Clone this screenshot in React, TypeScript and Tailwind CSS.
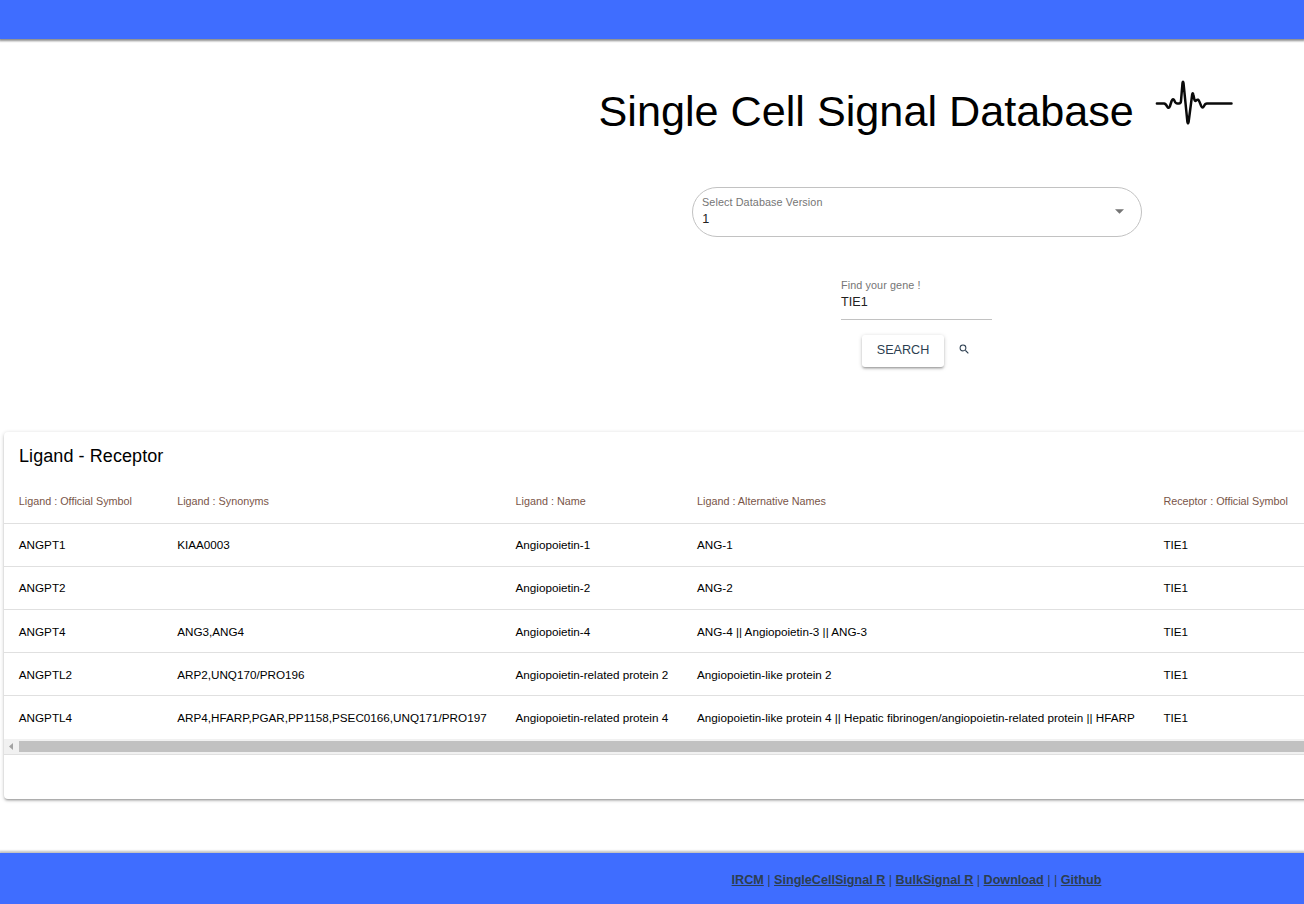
import React from 'react';

const columns = [
  { label: 'Ligand : Official Symbol', width: 'w-[158.4px]' },
  { label: 'Ligand : Synonyms', width: 'w-[338.3px]' },
  { label: 'Ligand : Name', width: 'w-[181.5px]' },
  { label: 'Ligand : Alternative Names', width: 'w-[466.4px]' },
  { label: 'Receptor : Official Symbol', width: 'w-[153.6px]' },
];

const rows = [
  ['ANGPT1', 'KIAA0003', 'Angiopoietin-1', 'ANG-1', 'TIE1'],
  ['ANGPT2', '', 'Angiopoietin-2', 'ANG-2', 'TIE1'],
  ['ANGPT4', 'ANG3,ANG4', 'Angiopoietin-4', 'ANG-4 || Angiopoietin-3 || ANG-3', 'TIE1'],
  ['ANGPTL2', 'ARP2,UNQ170/PRO196', 'Angiopoietin-related protein 2', 'Angiopoietin-like protein 2', 'TIE1'],
  [
    'ANGPTL4',
    'ARP4,HFARP,PGAR,PP1158,PSEC0166,UNQ171/PRO197',
    'Angiopoietin-related protein 4',
    'Angiopoietin-like protein 4 || Hepatic fibrinogen/angiopoietin-related protein || HFARP',
    'TIE1',
  ],
];

const rowPadding = ['pb-[1px]', 'pb-[1px]', 'pt-[2px]', 'pt-[2px]', 'pt-0'];

const links = ['IRCM', 'SingleCellSignal R', 'BulkSignal R', 'Download', '', 'Github'];

function Pulse() {
  return (
    <svg className="mt-[40px] ml-[20px] h-[50px] w-[80px] shrink-0" viewBox="0 0 80 50" fill="none">
      <path
        d="M2.9 24.4H10Q11.8 24.6 13.2 27.6Q14.8 30.4 16 27L17.6 22Q19 18.6 20.4 21.6Q21.6 24.6 23.4 24.6H25Q26.8 24.6 27 22L28.5 4Q29 1.6 29.5 4L33.4 43Q34 45.8 34.6 43L38.2 15.4Q38.8 13 39.3 15.6L40.5 21Q41 22.8 42.4 21.2Q44.2 19.6 45.4 22.6L47.2 27Q48.6 30 50 27Q51 24.4 53 24.4H77.5"
        stroke="#0a0a0a"
        strokeWidth="2.5"
        strokeLinecap="round"
        strokeLinejoin="round"
      />
    </svg>
  );
}

export default function App() {
  return (
    <div className="flex h-[904px] w-full flex-col overflow-hidden bg-white font-['Liberation_Sans',Arial,sans-serif] text-black">
      <header className="h-[39px] w-full shrink-0 bg-[#3f6dff] shadow-[0_1px_2px_1px_rgba(0,0,0,0.45)]" />

      <div className="flex h-[148px] shrink-0 pl-[598.5px]">
        <h1 className="mt-[48px] h-[48px] text-[43.2px] leading-[48px] whitespace-nowrap">Single Cell Signal Database</h1>
        <Pulse />
      </div>

      <div className="ml-[692px] flex h-[50px] w-[450px] shrink-0 justify-between rounded-full border border-[#c2c2c2] pr-[17px] pl-[9px]">
        <div className="flex flex-col">
          <label className="mt-[7px] h-[15px] text-[10.8px] leading-[15px] tracking-[0.1px] text-[#757575]">Select Database Version</label>
          <span className="mt-[1px] ml-[0.3px] h-[16px] text-[12.6px] leading-[16px] text-[#212121]">1</span>
        </div>
        <svg className="mt-[21px] h-[5px] w-[9px]" viewBox="0 0 9 5">
          <path d="M0 0.3H9L4.5 4.8Z" fill="#757575" />
        </svg>
      </div>

      <div className="mt-[41px] ml-[841px] flex h-[42px] w-[151px] shrink-0 flex-col border-b border-[#c2c2c2]">
        <label className="h-[15px] text-[10.8px] leading-[15px] tracking-[0.1px] text-[#757575]">Find your gene !</label>
        <span className="mt-[1px] h-[16px] text-[12.6px] leading-[16px] tracking-[0.05px] text-[#212121]">TIE1</span>
      </div>

      <div className="mt-[15px] ml-[862px] flex h-[32px] shrink-0 items-center">
        <button className="h-[32px] w-[82px] rounded-[3px] pb-[2px] text-[12.6px] text-[#2c3e50] shadow-[0_1px_4px_rgba(0,0,0,0.2),0_2px_2px_rgba(0,0,0,0.14),0_2px_1px_-1px_rgba(0,0,0,0.12)]">
          SEARCH
        </button>
        <svg className="mb-[3px] ml-[14px] h-[12.6px] w-[12.6px]" viewBox="0 0 24 24">
          <path
            fill="#2c3e50"
            d="M15.5 14h-.79l-.28-.27A6.47 6.47 0 0 0 16 9.5 6.5 6.5 0 1 0 9.5 16c1.61 0 3.09-.59 4.23-1.57l.27.28v.79l5 4.99L20.49 19l-4.99-5zm-6 0C7.01 14 5 11.99 5 9.5S7.01 5 9.5 5 14 7.01 14 9.5 11.99 14 9.5 14z"
          />
        </svg>
      </div>

      <section className="mt-[65px] ml-[4px] flex h-[367px] w-[1400px] shrink-0 flex-col rounded-[4px] bg-white shadow-[0_1px_4px_rgba(0,0,0,0.2),0_2px_2px_rgba(0,0,0,0.14),0_2px_1px_-1px_rgba(0,0,0,0.12)]">
        <h2 className="mt-[12px] ml-[15px] h-[24px] text-[18px] leading-[24px] tracking-[0.08px]">Ligand - Receptor</h2>
        <div className="mt-[12px] flex h-[44px] shrink-0 items-center border-b border-[#e0e0e0] pl-[14.8px] text-[10.8px] text-[#795548]">
          {columns.map((c) => (
            <div key={c.label} className={`${c.width} shrink-0 whitespace-nowrap`}>
              {c.label}
            </div>
          ))}
        </div>
        {rows.map((row, i) => (
          <div
            key={row[0]}
            className={`flex shrink-0 items-center pl-[14.8px] text-[11.7px] ${rowPadding[i]} ${
              i < 4 ? 'h-[43px] border-b border-[#e0e0e0]' : 'h-[43px]'
            }`}
          >
            {row.map((cell, j) => (
              <div key={j} className={`${columns[j].width} shrink-0 whitespace-nowrap`}>
                {cell}
              </div>
            ))}
          </div>
        ))}
        <div className="flex h-[15px] shrink-0 items-start bg-[#f1f1f1] pt-[2px]">
          <svg className="mt-[2px] ml-[5px] h-[7px] w-[4px]" viewBox="0 0 4 7">
            <path d="M4 0V7L0 3.5Z" fill="#a3a3a3" />
          </svg>
          <div className="ml-[6px] h-[11px] grow bg-[#c1c1c1]" />
        </div>
        <div className="h-px shrink-0 bg-[#e0e0e0]" />
      </section>

      <footer className="mt-[54px] h-[51px] shrink-0 bg-[#3f6dff] pt-[19px] pl-[731.6px] text-[12.6px] leading-[16px] whitespace-nowrap text-[#2c3e50] shadow-[0_-1px_2px_1px_rgba(0,0,0,0.25)]">
        {links.map((link, i) => (
          <React.Fragment key={i}>
            {i > 0 && (link ? ' | ' : ' |')}
            {link && (
              <a href="#" className="font-bold underline">
                {link}
              </a>
            )}
          </React.Fragment>
        ))}
      </footer>
    </div>
  );
}
